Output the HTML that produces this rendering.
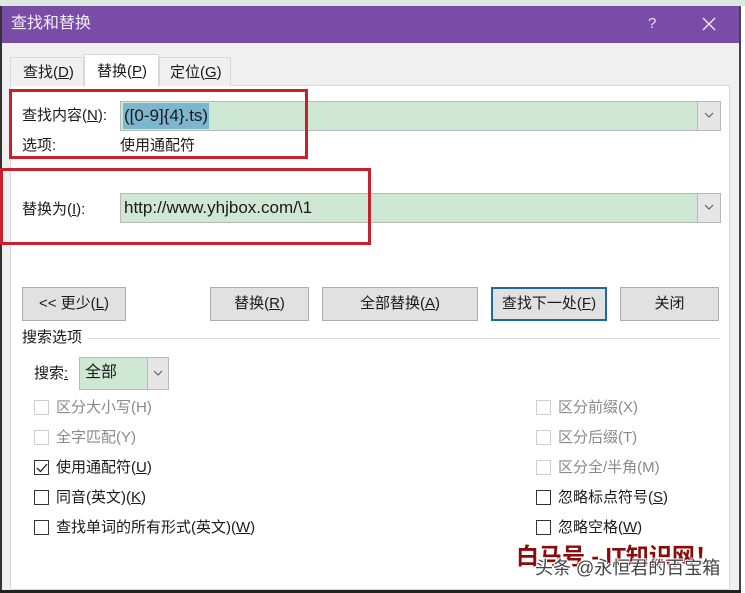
<!DOCTYPE html>
<html><head><meta charset="utf-8"><style>
*{margin:0;padding:0;box-sizing:border-box}
body{width:745px;height:593px;overflow:hidden;background:#fff;font-family:"Liberation Sans","Noto Sans CJK SC",sans-serif;font-size:15px;color:#1a1a1a;position:relative}
.a{position:absolute}
.u{text-decoration:underline}
.btn{position:absolute;top:287px;height:34px;background:#e1e1e1;border:1px solid #adadad;text-align:center;line-height:32px;font-size:15px}
.cb{position:absolute;width:15px;height:15px;border:1px solid #333;background:#fff}
.cb.d{border-color:#cfcfcf}
.t{position:absolute;font-size:15px;line-height:20px;white-space:nowrap}
.g{color:#8a8a8a}
.dd{position:absolute;background:#e6e6e6;border:1px solid #b9b9b9}
</style></head><body>
<div class="a" style="left:0;top:0;width:745px;height:6px;background:#dfe8e0"></div>
<div class="a" style="left:0;top:6px;width:741px;height:37px;background:#794ca7"></div>
<div class="t" style="left:11px;top:14px;color:#f2eef7;font-size:16px">查找和替换</div>
<div class="t" style="left:648px;top:14px;color:#e8e0f2;font-size:15px">?</div>
<svg class="a" style="left:702px;top:17px" width="14" height="14"><path d="M1 1L13 13M13 1L1 13" stroke="#eee" stroke-width="1.4"/></svg>
<div class="a" style="left:0;top:43px;width:741px;height:550px;background:#f0f0f0"></div>
<div class="a" style="left:0;top:6px;width:2px;height:587px;background:#333"></div>
<div class="a" style="left:739px;top:6px;width:2px;height:587px;background:#444"></div>
<div class="a" style="left:0;top:590px;width:741px;height:3px;background:#222"></div>
<div class="a" style="left:10px;top:85px;width:720px;height:505px;background:#fff;border:1px solid #d9d9d9"></div>
<div class="a" style="left:10px;top:57px;width:74px;height:29px;border:1px solid #d9d9d9;border-bottom:none;background:#f0f0f0"></div>
<div class="t" style="left:23px;top:63px">查找(<span class="u">D</span>)</div>
<div class="a" style="left:84px;top:54px;width:75px;height:33px;border:1px solid #d9d9d9;border-bottom:none;background:#fff"></div>
<div class="t" style="left:97px;top:62px">替换(<span class="u">P</span>)</div>
<div class="a" style="left:159px;top:57px;width:72px;height:29px;border:1px solid #d9d9d9;border-bottom:none;background:#f0f0f0"></div>
<div class="t" style="left:170px;top:63px">定位(<span class="u">G</span>)</div>

<div class="t" style="left:22px;top:106px">查找内容(<span class="u">N</span>):</div>
<div class="a" style="left:120px;top:101px;width:601px;height:30px;background:#cfe8d3;border:1px solid #b9b9b9"></div>
<div class="a" style="left:123px;top:103px;width:86px;height:26px;background:#7fb6cf"></div>
<div class="t" style="left:124px;top:106px;font-size:17px">([0-9]{4}.ts)</div>
<div class="dd" style="left:697px;top:101px;width:24px;height:30px"></div>
<svg class="a" style="left:704px;top:112px" width="10" height="7"><path d="M1 1L5 5L9 1" stroke="#555" fill="none"/></svg>
<div class="t" style="left:22px;top:136px">选项:</div>
<div class="t" style="left:120px;top:136px">使用通配符</div>
<div class="a" style="left:9px;top:89px;width:299px;height:70px;border:3px solid #c8202c"></div>

<div class="t" style="left:22px;top:200px">替换为(<span class="u">I</span>):</div>
<div class="a" style="left:120px;top:193px;width:601px;height:30px;background:#cfe8d3;border:1px solid #b9b9b9"></div>
<div class="t" style="left:124px;top:198px;font-size:17px">http://www.yhjbox.com/\1</div>
<div class="dd" style="left:697px;top:193px;width:24px;height:30px"></div>
<svg class="a" style="left:704px;top:204px" width="10" height="7"><path d="M1 1L5 5L9 1" stroke="#555" fill="none"/></svg>
<div class="a" style="left:0;top:168px;width:371px;height:77px;border:3px solid #c8202c"></div>

<div class="btn" style="left:22px;width:104px">&lt;&lt; 更少(<span class="u">L</span>)</div>
<div class="btn" style="left:210px;width:99px">替换(<span class="u">R</span>)</div>
<div class="btn" style="left:322px;width:156px">全部替换(<span class="u">A</span>)</div>
<div class="btn" style="left:491px;width:116px;border:2px solid #1c6aa0;line-height:30px">查找下一处(<span class="u">F</span>)</div>
<div class="btn" style="left:620px;width:99px">关闭</div>

<div class="t" style="left:22px;top:328px">搜索选项</div>
<div class="a" style="left:88px;top:338px;width:632px;height:1px;background:#dcdcdc"></div>
<div class="t" style="left:34px;top:364px">搜索<span class="u">:</span></div>
<div class="a" style="left:79px;top:357px;width:90px;height:33px;background:#cfe8d3;border:1px solid #b9b9b9"></div>
<div class="t" style="left:85px;top:363px;font-size:16px">全部</div>
<div class="dd" style="left:147px;top:357px;width:22px;height:33px"></div>
<svg class="a" style="left:153px;top:370px" width="10" height="7"><path d="M1 1L5 5L9 1" stroke="#555" fill="none"/></svg>

<div class="cb d" style="left:34px;top:400px"></div><div class="t g" style="left:56px;top:398px">区分大小写(H)</div>
<div class="cb d" style="left:34px;top:430px"></div><div class="t g" style="left:56px;top:428px">全字匹配(Y)</div>
<div class="cb" style="left:34px;top:460px"></div>
<svg class="a" style="left:36px;top:462px" width="12" height="12"><path d="M1 6L4.5 9.5L11 2" stroke="#222" stroke-width="1.3" fill="none"/></svg>
<div class="t" style="left:56px;top:458px">使用通配符(<span class="u">U</span>)</div>
<div class="cb" style="left:34px;top:490px"></div><div class="t" style="left:56px;top:488px">同音(英文)(<span class="u">K</span>)</div>
<div class="cb" style="left:34px;top:520px"></div><div class="t" style="left:56px;top:518px">查找单词的所有形式(英文)(<span class="u">W</span>)</div>

<div class="cb d" style="left:536px;top:400px"></div><div class="t g" style="left:558px;top:398px">区分前缀(X)</div>
<div class="cb d" style="left:536px;top:430px"></div><div class="t g" style="left:558px;top:428px">区分后缀(T)</div>
<div class="cb d" style="left:536px;top:460px"></div><div class="t g" style="left:558px;top:458px">区分全/半角(M)</div>
<div class="cb" style="left:536px;top:490px"></div><div class="t" style="left:558px;top:488px">忽略标点符号(<span class="u">S</span>)</div>
<div class="cb" style="left:536px;top:520px"></div><div class="t" style="left:558px;top:518px">忽略空格(<span class="u">W</span>)</div>

<div class="a" style="left:516px;top:542px;font-size:23px;font-weight:bold;color:#8b0a0a;line-height:28px;white-space:nowrap">白马号 - IT知识网！</div>
<div class="a" style="left:535px;top:556px;font-size:18px;color:#444;line-height:24px;white-space:nowrap;text-shadow:1px 1px 0 #fff,-1px -1px 0 #fff,1px -1px 0 #fff,-1px 1px 0 #fff">头条 @永恒君的百宝箱</div>
</body></html>
